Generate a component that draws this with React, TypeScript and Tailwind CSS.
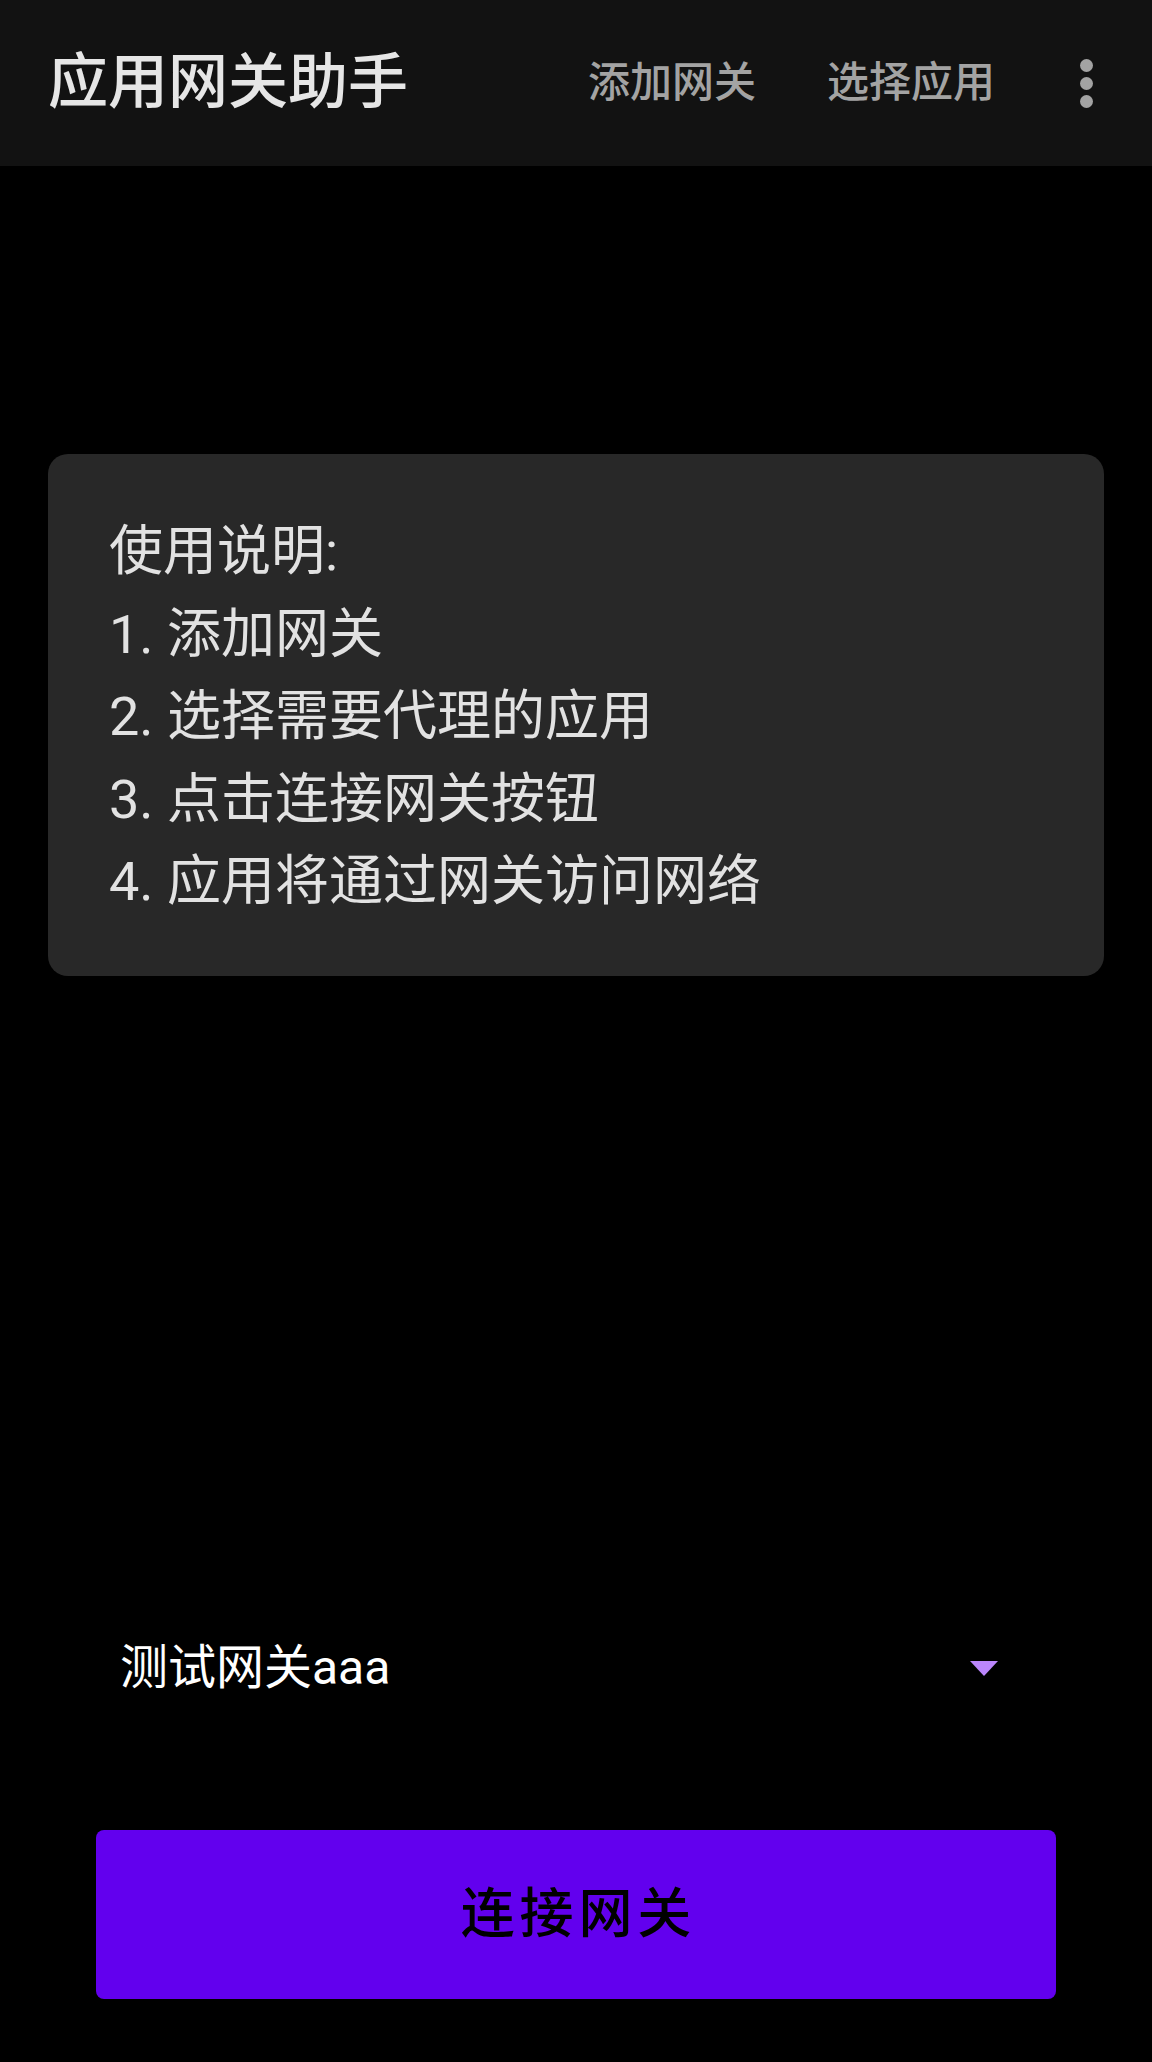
import React from 'react';

const font = "font-['Roboto','Noto_Sans_CJK_SC',sans-serif]";

const steps = [
  '使用说明:',
  '1. 添加网关',
  '2. 选择需要代理的应用',
  '3. 点击连接网关按钮',
  '4. 应用将通过网关访问网络',
];

const App = () => {
  return (
    <div className={`flex flex-col w-full h-[2062px] bg-black ${font}`}>
      {/* toolbar */}
      <div className="flex items-center h-[166px] pl-[48px] pr-[59px] bg-[#121212]">
        <div className="text-[60px] leading-none font-medium text-[#e6e6e6]">应用网关助手</div>
        <div className="ml-auto flex items-center">
          <button className="text-[42px] leading-none font-medium text-[#a3a3a3]">添加网关</button>
          <button className="ml-[71px] text-[42px] leading-none font-medium text-[#a3a3a3]">选择应用</button>
          <div className="ml-[85px] flex flex-col items-center gap-[5px]">
            <span className="w-[13px] h-[13px] rounded-full bg-[#a3a3a3]" />
            <span className="w-[13px] h-[13px] rounded-full bg-[#a3a3a3]" />
            <span className="w-[13px] h-[13px] rounded-full bg-[#a3a3a3]" />
          </div>
        </div>
      </div>

      {/* instructions card */}
      <div className="mt-[288px] mx-[48px] h-[522px] rounded-[20px] bg-[#282828] pl-[61px] pt-[57px]">
        {steps.map((s) => (
          <div key={s} className="text-[54px] leading-[82.6px] text-[#e2e2e2] whitespace-nowrap">
            {s}
          </div>
        ))}
      </div>

      {/* gateway spinner */}
      <div className="mt-[632px] mx-[96px] flex items-center h-[120px] pl-[24px] pr-[58px]">
        <span className="text-[48px] leading-none text-white">测试网关aaa</span>
        <svg className="ml-auto" width="28" height="15" viewBox="0 0 28 15">
          <polygon points="0,0 28,0 14,15" fill="#bb86fc" />
        </svg>
      </div>

      {/* connect button */}
      <button className="mt-[102px] mx-[96px] h-[169px] rounded-[8px] bg-[#6200ee] flex items-center justify-center">
        <span className="text-[54px] leading-none font-medium tracking-[0.09em] text-black pl-[0.09em]">连接网关</span>
      </button>
    </div>
  );
};

export default App;
